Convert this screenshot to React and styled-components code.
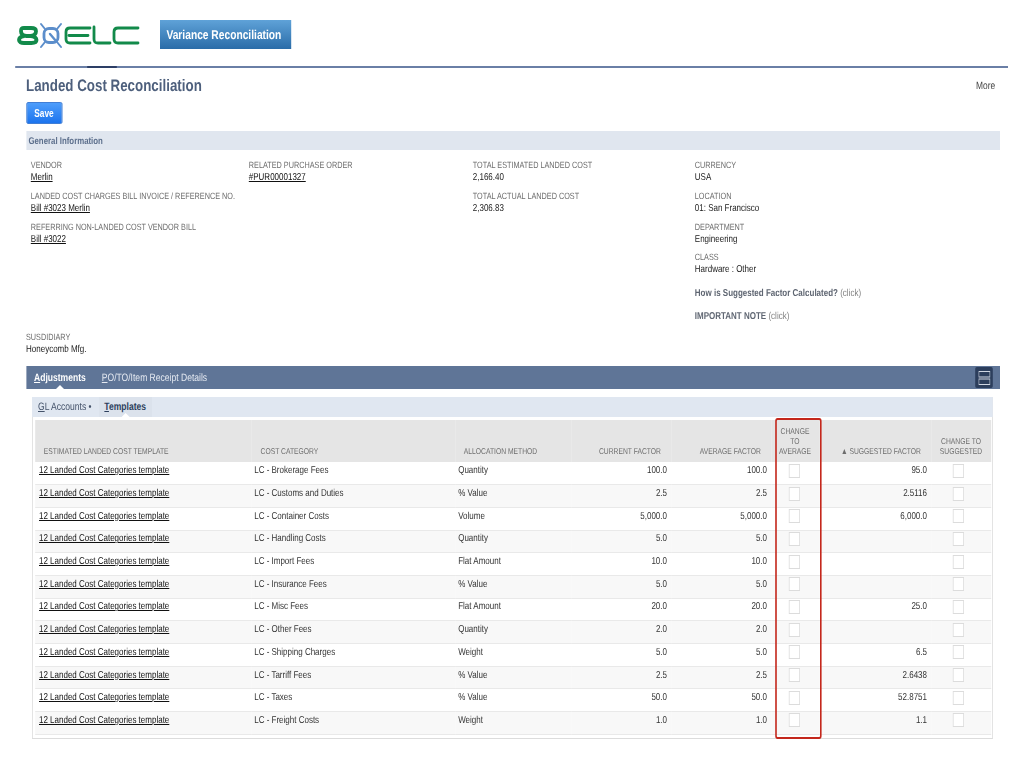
import React from "react";
import styled, { createGlobalStyle } from "styled-components";

/* The whole sheet is laid out at 1280px wide and squeezed to the 1024px window,
   which is how the reference's narrow glyphs and tall check boxes come about. */
const Global = createGlobalStyle`
  html, body { margin: 0; padding: 0; background: #fff; overflow: hidden; }
  body { font-family: "Liberation Sans", Arial, sans-serif; color: #333; text-rendering: geometricPrecision; }
  * { box-sizing: border-box; }
`;

const Page = styled.div`
  width: 1280px;
  height: 768px;
  transform: scaleX(0.8);
  transform-origin: 0 0;
  display: flex;
  flex-direction: column;
  overflow: hidden;
  position: relative;
`;
const Header = styled.header`
  height: 66px;
  padding: 20px 0 0 20px;
  display: flex;
  align-items: flex-start;
  gap: 25px;
`;
const Logo = styled.svg`
  width: 155px;
  height: 28px;
  margin-top: 1px;
`;
const Badge = styled.div`
  width: 164px;
  height: 29px;
  background: linear-gradient(#5fa2d8, #2a6ca8);
  color: #fff;
  font-size: 12.8px;
  font-weight: 700;
  white-space: nowrap;
  display: flex;
  align-items: center;
  padding-left: 8px;
`;
const Rule = styled.div`
  height: 2px;
  margin: 0 20px 0 19px;
  background: #6a7fa6;
  position: relative;
  &::after {
    content: "";
    position: absolute;
    left: 90px;
    top: 0;
    width: 37px;
    height: 2px;
    background: #2d3f66;
  }
`;
const Body = styled.main`
  padding: 0 30px 0 32.5px;
  display: flex;
  flex-direction: column;
`;
const TitleRow = styled.div`
  display: flex;
  justify-content: space-between;
  align-items: center;
  margin-top: 7px;
  height: 22px;
`;
const Title = styled.h1`
  margin: 0;
  font-size: 16.7px;
  font-weight: 700;
  color: #4d5f7c;
`;
const More = styled.span`
  font-size: 10.5px;
  color: #444;
  margin-right: 6px;
`;
const SaveButton = styled.button`
  display: block;
  width: 45px;
  height: 22px;
  margin-top: 5px;
  border: 1px solid #2a6fd0;
  border-radius: 2px;
  background: linear-gradient(#4d9dfb, #1c74ee);
  color: #fff;
  font: 700 10.4px "Liberation Sans", Arial, sans-serif;
  padding: 0;
`;
const SectionBar = styled.div`
  height: 19px;
  margin-top: 7px;
  background: #e0e6ef;
  color: #5c6f8c;
  font-size: 9.8px;
  font-weight: 700;
  display: flex;
  align-items: center;
  padding: 1px 0 0 3px;
`;
const InfoGrid = styled.div`
  display: grid;
  grid-template-columns: 272.5px 280px 277.5px 1fr;
  padding: 9px 0 0 6px;
  height: 181px;
`;
const InfoCol = styled.div`
  display: flex;
  flex-direction: column;
  gap: 5.8px;
`;
const Field = styled.div`
  display: flex;
  flex-direction: column;
`;
const Label = styled.div`
  font-size: 9.1px;
  line-height: 12px;
  color: #6d6d6d;
  white-space: nowrap;
`;
const Value = styled.div`
  font-size: 10px;
  line-height: 13px;
  color: #222;
`;
const LinkValue = styled(Value)`
  text-decoration: underline;
  color: #111;
`;
const Note = styled.div`
  font-size: 10px;
  line-height: 13px;
  color: #808080;
  margin-top: ${(p) => p.$top}px;
  b { color: #5f6672; }
`;
const Subsidiary = styled(Field)`
  height: 26px;
`;
const TabBar = styled.div`
  height: 23px;
  margin-top: 9px;
  background: #5f7597;
  display: flex;
  align-items: center;
  padding-left: 10px;
  gap: 20px;
  position: relative;
`;
const Tab = styled.span`
  font-size: 10.7px;
  color: ${(p) => (p.$active ? "#fff" : "#e4e9f1")};
  font-weight: ${(p) => (p.$active ? 700 : 400)};
  position: relative;
  ${(p) =>
    p.$active
      ? `&::after { content: ""; position: absolute; left: 50%; bottom: -5px; margin-left: -5px; border: 5px solid transparent; border-top: 0; border-bottom-color: #fff; border-bottom-width: 4px; }`
      : ""}
`;
const LayoutToggle = styled.div`
  position: absolute;
  right: 9px;
  top: 1px;
  width: 22px;
  height: 21px;
  background: #2c3e5c;
  border-radius: 2px;
  display: flex;
  align-items: center;
  justify-content: center;
`;
const Panel = styled.section`
  margin: 8px 9px 0 7.5px;
  border: 1px solid #dcdcdc;
  border-top: 0;
  background: #fff;
  padding-bottom: 3px;
`;
const SubTabs = styled.div`
  height: 20px;
  background: #e0e7f1;
  display: flex;
  align-items: stretch;
  padding-left: 7.5px;
  margin: 0 -1px;
`;
const SubTab = styled.span`
  font-size: 10.7px;
  line-height: 20px;
  padding: 0 ${(p) => (p.$active ? 7.5 : 10)}px 0 ${(p) => (p.$active ? 6 : 0)}px;
  color: ${(p) => (p.$active ? "#2c3e5c" : "#44526a")};
  background: ${(p) => (p.$active ? "#dbe2ec" : "transparent")};
  font-weight: ${(p) => (p.$active ? 700 : 400)};
  position: relative;
  ${(p) =>
    p.$active
      ? `&::after { content: ""; position: absolute; left: 50%; bottom: 0; margin-left: -5px; border: 5px solid transparent; border-top: 0; border-bottom-color: #fff; border-bottom-width: 4px; }`
      : ""}
`;
const Table = styled.table`
  width: 1195px;
  margin: 3px 0 0 2.75px;
  border-collapse: collapse;
  table-layout: fixed;
`;
const HeadRow = styled.tr`
  background: #e5e5e5;
`;
const Th = styled.th`
  height: 42px;
  font-size: 8.45px;
  line-height: 10px;
  font-weight: 400;
  color: #6d6d6d;
  vertical-align: bottom;
  padding: 0 ${(p) => p.$pr || 0}px 6px ${(p) => p.$pl || 0}px;
  text-align: ${(p) => p.$align || "left"};
`;
const Tr = styled.tr`
  height: 22.7px;
  background: ${(p) => (p.$alt ? "#f8f8f8" : "#fff")};
  border-bottom: 1px solid #e9e9e9;
`;
const Td = styled.td`
  font-size: 10px;
  color: #333;
  padding: 0 ${(p) => p.$pr || 0}px 5px ${(p) => p.$pl || 0}px;
  text-align: ${(p) => p.$align || "left"};
  white-space: nowrap;
`;
const TemplateLink = styled.a`
  color: #111;
  text-decoration: underline;
`;
const Check = styled.span`
  display: inline-block;
  width: 14px;
  height: 14px;
  vertical-align: middle;
  border: 1px solid #dcdcdc;
  background: #fff;
`;
const Highlight = styled.div`
  position: absolute;
  left: 969px;
  top: 418px;
  width: 58px;
  height: 321px;
  border: 2px solid #c4271c;
  border-left-width: 2.5px;
  border-right-width: 2.5px;
  border-radius: 3px;
  pointer-events: none;
`;

const rows = [
  ["LC - Brokerage Fees", "Quantity", "100.0", "100.0", "95.0"],
  ["LC - Customs and Duties", "% Value", "2.5", "2.5", "2.5116"],
  ["LC - Container Costs", "Volume", "5,000.0", "5,000.0", "6,000.0"],
  ["LC - Handling Costs", "Quantity", "5.0", "5.0", ""],
  ["LC - Import Fees", "Flat Amount", "10.0", "10.0", ""],
  ["LC - Insurance Fees", "% Value", "5.0", "5.0", ""],
  ["LC - Misc Fees", "Flat Amount", "20.0", "20.0", "25.0"],
  ["LC - Other Fees", "Quantity", "2.0", "2.0", ""],
  ["LC - Shipping Charges", "Weight", "5.0", "5.0", "6.5"],
  ["LC - Tarriff Fees", "% Value", "2.5", "2.5", "2.6438"],
  ["LC - Taxes", "% Value", "50.0", "50.0", "52.8751"],
  ["LC - Freight Costs", "Weight", "1.0", "1.0", "1.1"],
];

function LogoMark() {
  return (
    <Logo viewBox="0 0 124 28" preserveAspectRatio="none" fill="none">
      <g stroke="#128a4a" strokeWidth="3.8">
        <path d="M8 7h7c3 0 5 .8 5 3.200s-2 4.300-5.500 4.800h-4C7 14.500 5 12.600 5 10.200S5.500 7 8 7z" />
        <path d="M10.500 15h4C18 15.500 20.500 17 20.500 19s-2 3-5 3H8c-3 0-5-1-5-3s2-3.500 5.500-4" />
      </g>
      <g stroke="#5c8ecb" strokeLinecap="round">
        <rect x="28" y="7.500" width="14" height="14" rx="5" strokeWidth="2.800" />
        <path d="M25 3l4 5M45 3l-4 5M25 26l4-5M45 26l-4-5" strokeWidth="2" />
        <path d="M34 13l6 7" strokeWidth="2.400" />
      </g>
      <g stroke="#128a4a" strokeWidth="2.800" strokeLinecap="round">
        <path d="M74 7H54c-3 0-4 1.500-4 4v7c0 2.500 1 4 4 4h20M53 14.500h19" />
        <path d="M78 6v12c0 3 1 4 4 4h12" />
        <path d="M122 7h-20c-3 0-4 1.500-4 4v7c0 2.500 1 4 4 4h20" />
      </g>
    </Logo>
  );
}

export default function App() {
  return (
    <Page>
      <Global />
      <Header>
        <LogoMark />
        <Badge>Variance Reconciliation</Badge>
      </Header>
      <Rule />
      <Body>
        <TitleRow>
          <Title>Landed Cost Reconciliation</Title>
          <More>More</More>
        </TitleRow>
        <SaveButton>Save</SaveButton>
        <SectionBar>General Information</SectionBar>
        <InfoGrid>
          <InfoCol>
            <Field>
              <Label>VENDOR</Label>
              <LinkValue>Merlin</LinkValue>
            </Field>
            <Field>
              <Label>LANDED COST CHARGES BILL INVOICE / REFERENCE NO.</Label>
              <LinkValue>Bill #3023 Merlin</LinkValue>
            </Field>
            <Field>
              <Label>REFERRING NON-LANDED COST VENDOR BILL</Label>
              <LinkValue>Bill #3022</LinkValue>
            </Field>
          </InfoCol>
          <InfoCol>
            <Field>
              <Label>RELATED PURCHASE ORDER</Label>
              <LinkValue>#PUR00001327</LinkValue>
            </Field>
          </InfoCol>
          <InfoCol>
            <Field>
              <Label>TOTAL ESTIMATED LANDED COST</Label>
              <Value>2,166.40</Value>
            </Field>
            <Field>
              <Label>TOTAL ACTUAL LANDED COST</Label>
              <Value>2,306.83</Value>
            </Field>
          </InfoCol>
          <InfoCol>
            <Field>
              <Label>CURRENCY</Label>
              <Value>USA</Value>
            </Field>
            <Field>
              <Label>LOCATION</Label>
              <Value>01: San Francisco</Value>
            </Field>
            <Field>
              <Label>DEPARTMENT</Label>
              <Value>Engineering</Value>
            </Field>
            <Field>
              <Label>CLASS</Label>
              <Value>Hardware : Other</Value>
            </Field>
            <Note $top={5}>
              <b>How is Suggested Factor Calculated?</b> (click)
            </Note>
            <Note $top={4}>
              <b>IMPORTANT NOTE</b> (click)
            </Note>
          </InfoCol>
        </InfoGrid>
        <Subsidiary>
          <Label>SUSDIDIARY</Label>
          <Value>Honeycomb Mfg.</Value>
        </Subsidiary>
        <TabBar>
          <Tab $active>
            <u>A</u>djustments
          </Tab>
          <Tab>
            <u>P</u>O/TO/Item Receipt Details
          </Tab>
          <LayoutToggle>
            <svg width="15" height="14" viewBox="0 0 15 14" fill="none" stroke="#cfd6e2" strokeWidth="1">
              <rect x="0.5" y="0.5" width="14" height="5.5" />
              <rect x="0.5" y="8" width="14" height="5.5" />
            </svg>
          </LayoutToggle>
        </TabBar>
        <Panel>
          <SubTabs>
            <SubTab>
              <u>G</u>L Accounts •
            </SubTab>
            <SubTab $active>
              <u>T</u>emplates
            </SubTab>
          </SubTabs>
          <Table>
            <colgroup>
              <col style={{ width: 270 }} />
              <col style={{ width: 255 }} />
              <col style={{ width: 145 }} />
              <col style={{ width: 125 }} />
              <col style={{ width: 125 }} />
              <col style={{ width: 60 }} />
              <col style={{ width: 140 }} />
              <col style={{ width: 75 }} />
            </colgroup>
            <thead>
              <HeadRow>
                <Th $pl={11}>ESTIMATED LANDED COST TEMPLATE</Th>
                <Th $pl={12}>COST CATEGORY</Th>
                <Th $pl={11}>ALLOCATION METHOD</Th>
                <Th $align="right" $pr={12.5}>CURRENT FACTOR</Th>
                <Th $align="right" $pr={12.5}>AVERAGE FACTOR</Th>
                <Th $align="center">
                  CHANGE
                  <br />
                  TO
                  <br />
                  AVERAGE
                </Th>
                <Th $align="right" $pr={12.5}>▲ SUGGESTED FACTOR</Th>
                <Th $align="center">
                  CHANGE TO
                  <br />
                  SUGGESTED
                </Th>
              </HeadRow>
            </thead>
            <tbody>
              {rows.map((r, i) => (
                <Tr key={r[0]} $alt={i % 2 === 1}>
                  <Td $pl={5}>
                    <TemplateLink>12 Landed Cost Categories template</TemplateLink>
                  </Td>
                  <Td $pl={4}>{r[0]}</Td>
                  <Td $pl={4}>{r[1]}</Td>
                  <Td $align="right" $pr={5}>{r[2]}</Td>
                  <Td $align="right" $pr={5}>{r[3]}</Td>
                  <Td $align="center" $pr={2}>
                    <Check />
                  </Td>
                  <Td $align="right" $pr={5}>{r[4]}</Td>
                  <Td $align="center" $pr={6}>
                    <Check />
                  </Td>
                </Tr>
              ))}
            </tbody>
          </Table>
        </Panel>
      </Body>
      <Highlight />
    </Page>
  );
}
